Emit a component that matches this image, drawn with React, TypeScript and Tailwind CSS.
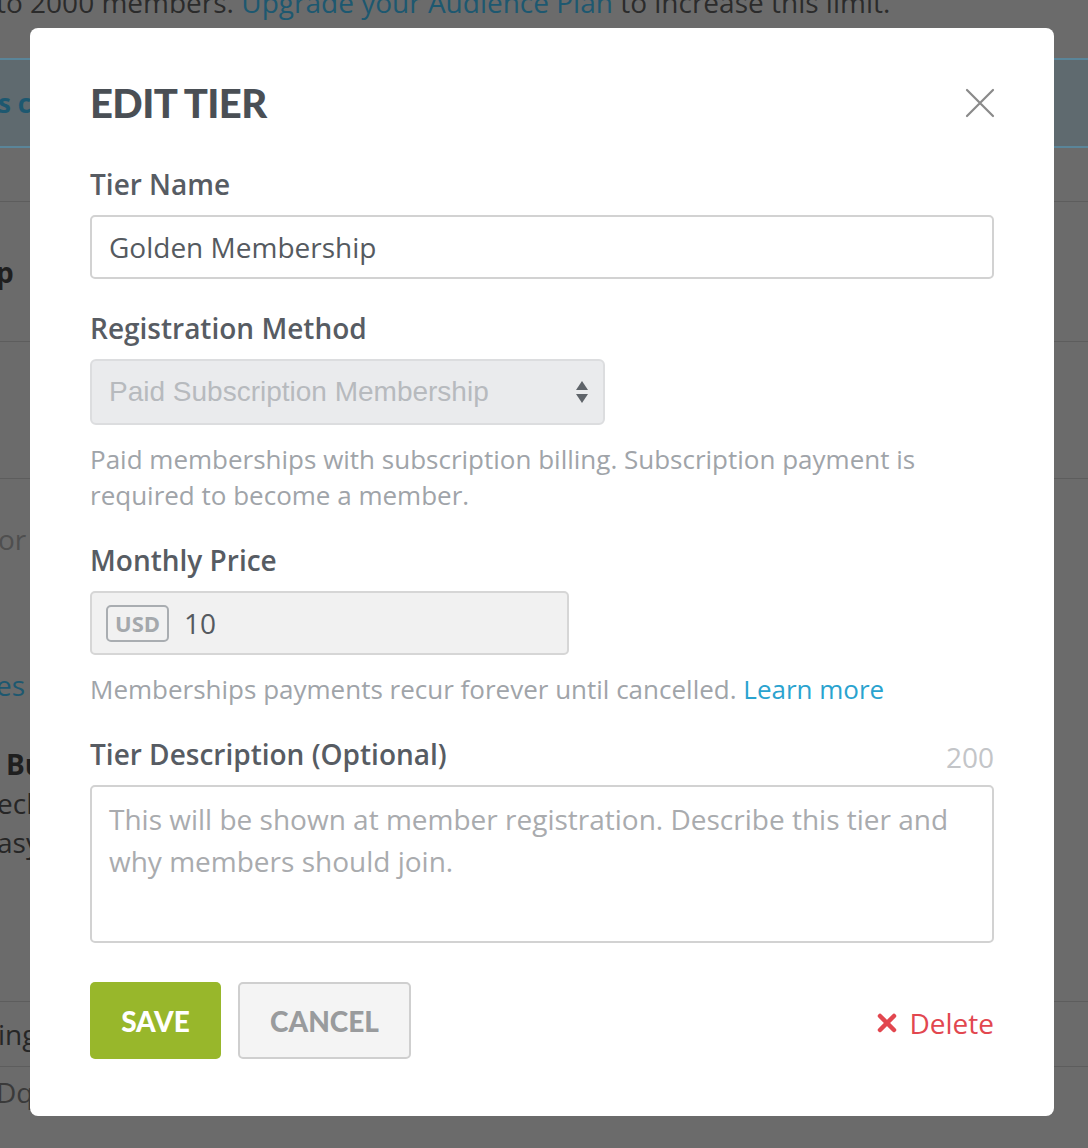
import React from "react";

const sans = { fontFamily: '"Open Sans", "Noto Sans", sans-serif' };
const head = { fontFamily: 'Lato, "Open Sans", sans-serif' };
const arial = { fontFamily: '"Liberation Sans", Arial, sans-serif' };

function Background() {
  return (
    <div className="flex flex-col w-full h-full" style={sans}>
      <div className="h-[58px] flex flex-col">
        <div className="-mt-[16px] -ml-[4px] text-[28px] leading-[36px] text-[#2b2b2b] whitespace-nowrap">
          to 2000 members. <span className="text-[#1d5870]">Upgrade your Audience Plan</span> to increase this limit.
        </div>
      </div>
      <div className="h-[90px] border-y-2 border-[#5a8599] bg-[#5f6a6f] flex items-center">
        <span className="text-[26px] font-bold text-[#1d5870] -ml-[2px]">s c</span>
      </div>
      <div className="h-[53px]" />
      <div className="border-t border-[#5d5d5d] h-[140px] flex items-center">
        <span className="text-[28px] font-bold text-[#1f1f1f] -ml-[4px]">p</span>
      </div>
      <div className="border-t border-[#5d5d5d] h-[137px]" />
      <div className="border-t border-[#5d5d5d] h-[523px] flex flex-col text-[28px] leading-[39px]">
        <span className="mt-[41px] -ml-[2px] text-[#4f4f4f]">or</span>
        <span className="mt-[107px] -ml-[4px] text-[#1d5870]">es</span>
        <span className="mt-[40px] ml-[6px] font-bold text-[#1f1f1f]">Bu</span>
        <span className="-ml-[3px] text-[#262626]">eck</span>
        <span className="-ml-[3px] text-[#262626]">asy</span>
      </div>
      <div className="border-t border-[#5d5d5d] h-[65px] flex items-center">
        <span className="text-[28px] text-[#262626] -ml-[2px]">ing</span>
      </div>
      <div className="border-t border-[#5d5d5d] flex items-start">
        <span className="text-[28px] text-[#3a3a3a] -ml-[4px] leading-[40px] mt-[5px]">Dqc</span>
      </div>
    </div>
  );
}

function Label({ children }: { children: React.ReactNode }) {
  return (
    <div className="text-[28px] leading-[36px] font-semibold text-[#575c63]" style={sans}>
      {children}
    </div>
  );
}

export default function App() {
  return (
    <div className="relative w-[1088px] h-[1148px] overflow-hidden bg-[#6b6b6b]">
      <Background />
      <div className="absolute left-[30px] top-[28px] w-[1024px] h-[1088px] bg-white rounded-[8px] px-[60px] flex flex-col" style={sans}>
        <div className="flex items-center justify-between mt-[53px] h-[44px]">
          <h1 className="text-[40px] leading-[44px] font-black text-[#4a4f55] tracking-[-0.6px]" style={head}>
            EDIT TIER
          </h1>
          <svg width="30" height="30" viewBox="0 0 30 30" className="mr-[-1px]">
            <path d="M2 2 L28 28 M28 2 L2 28" stroke="#8a8a8a" strokeWidth="2.2" strokeLinecap="round" />
          </svg>
        </div>

        <div className="mt-[41px]"><Label>Tier Name</Label></div>
        <div className="mt-[13px] h-[64px] border-2 border-[#d2d2d2] rounded-[5px] flex items-center pl-[17px] text-[28px] text-[#555a60]">
          Golden Membership
        </div>

        <div className="mt-[31px]"><Label>Registration Method</Label></div>
        <div className="mt-[13px] h-[66px] w-[515px] bg-[#eaebed] border-2 border-[#dcdddf] rounded-[6px] flex items-center justify-between pl-[17px] pr-[14px]">
          <span className="text-[28px] text-[#b7babe]" style={arial}>Paid Subscription Membership</span>
          <svg width="14" height="30" viewBox="0 0 14 30">
            <path d="M7 4 L13 13 L1 13 Z" fill="#5f646a" />
            <path d="M7 26 L13 17 L1 17 Z" fill="#5f646a" />
          </svg>
        </div>
        <div className="mt-[16px] text-[26px] leading-[36px] text-[#a0a4a9]">
          Paid memberships with subscription billing. Subscription payment is
          <br />
          required to become a member.
        </div>

        <div className="mt-[29px]"><Label>Monthly Price</Label></div>
        <div className="mt-[13px] h-[64px] w-[479px] bg-[#f1f1f1] border-2 border-[#d6d6d6] rounded-[5px] flex items-center pl-[14px]">
          <span className="h-[37px] px-[7px] border-2 border-[#a9adb1] rounded-[5px] flex items-center text-[22px] font-bold text-[#a4a8ac]">
            USD
          </span>
          <span className="ml-[15px] text-[28px] text-[#555a60]">10</span>
        </div>
        <div className="mt-[16px] text-[26px] leading-[36px] text-[#a0a4a9]">
          Memberships payments recur forever until cancelled.{" "}
          <span className="text-[#2aa3cf]">Learn more</span>
        </div>

        <div className="mt-[29px] flex items-end justify-between">
          <Label>Tier Description (Optional)</Label>
          <span className="text-[28px] leading-[30px] text-[#c3c5c8]">200</span>
        </div>
        <div className="mt-[13px] h-[158px] border-2 border-[#d2d2d2] rounded-[5px] pl-[17px] pr-[20px] pt-[11px] text-[28px] leading-[42px] text-[#a9abae]">
          This will be shown at member registration. Describe this tier and why members should join.
        </div>

        <div className="mt-[39px] flex items-center">
          <div className="h-[77px] w-[131px] rounded-[5px] bg-[#98b72b] flex items-center justify-center text-[28px] font-black text-white" style={head}>
            SAVE
          </div>
          <div className="ml-[17px] h-[77px] w-[173px] rounded-[5px] bg-[#f4f4f4] border-2 border-[#cfcfcf] flex items-center justify-center text-[28px] font-black text-[#999b9d]" style={head}>
            CANCEL
          </div>
          <div className="ml-auto flex items-center text-[28px] text-[#e2474f] mt-[4px]">
            <svg width="20" height="20" viewBox="0 0 20 20" className="mr-[12px]">
              <path d="M3 3 L17 17 M17 3 L3 17" stroke="#e2474f" strokeWidth="4.5" strokeLinecap="round" />
            </svg>
            Delete
          </div>
        </div>
      </div>
    </div>
  );
}
